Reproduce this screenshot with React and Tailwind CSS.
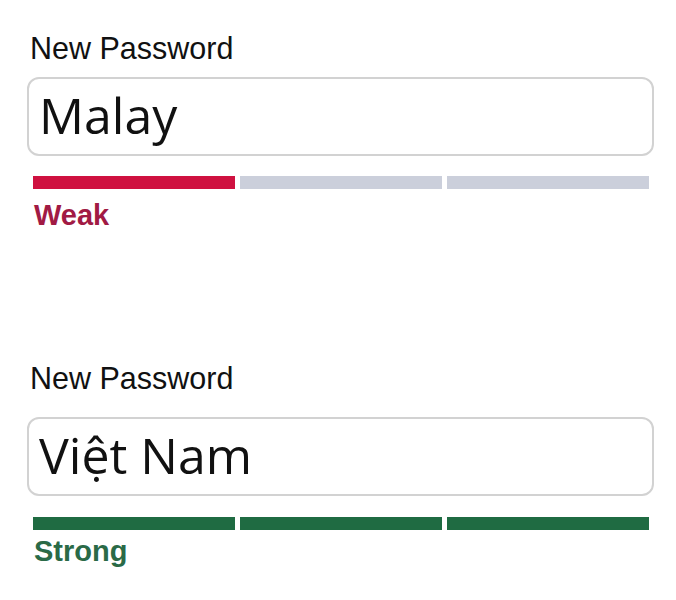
const fields = [
  {
    value: 'Malay',
    label: 'Weak',
    filled: 1,
    bar: 'bg-[#cf1140]',
    text: 'text-[#a11a44]',
    labelTop: 'mt-[30px]',
    boxTop: 'mt-[11px]',
    barTop: 'mt-[20px]',
    hintTop: 'mt-[10px]',
  },
  {
    value: 'Việt Nam',
    label: 'Strong',
    filled: 3,
    bar: 'bg-[#1f6b42]',
    text: 'text-[#2a6a47]',
    labelTop: 'mt-[129px]',
    boxTop: 'mt-[21px]',
    barTop: 'mt-[21px]',
    hintTop: 'mt-[5px]',
  },
];

const StrengthField = ({ field }) => (
  <div>
    <p className={`${field.labelTop} ml-[30px] text-[30.5px] leading-9 text-[#111] font-['Liberation_Sans',Arial,sans-serif]`}>
      New Password
    </p>
    <div
      className={`${field.boxTop} ml-[27px] w-[627px] h-[79px] border-2 border-[#d2d2d2] rounded-[12px] bg-white flex items-center pl-[10px] pb-[4px]`}
    >
      <span className="text-[50px] leading-none text-[#111] font-['Open_Sans','Noto_Sans',sans-serif]">
        {field.value}
      </span>
    </div>
    <div className={`${field.barTop} ml-[33px] w-[616px] grid grid-cols-3 gap-[5px]`}>
      {[0, 1, 2].map((i) => (
        <div key={i} className={`h-[13px] ${i < field.filled ? field.bar : 'bg-[#cbcfdb]'}`} />
      ))}
    </div>
    <p className={`${field.hintTop} ml-[34px] text-[29px] leading-8 font-bold ${field.text} font-['Liberation_Sans',Arial,sans-serif]`}>
      {field.label}
    </p>
  </div>
);

export default function App() {
  return (
    <div className="w-[676px] h-[600px] bg-white overflow-hidden">
      {fields.map((f) => (
        <StrengthField key={f.label} field={f} />
      ))}
    </div>
  );
}
